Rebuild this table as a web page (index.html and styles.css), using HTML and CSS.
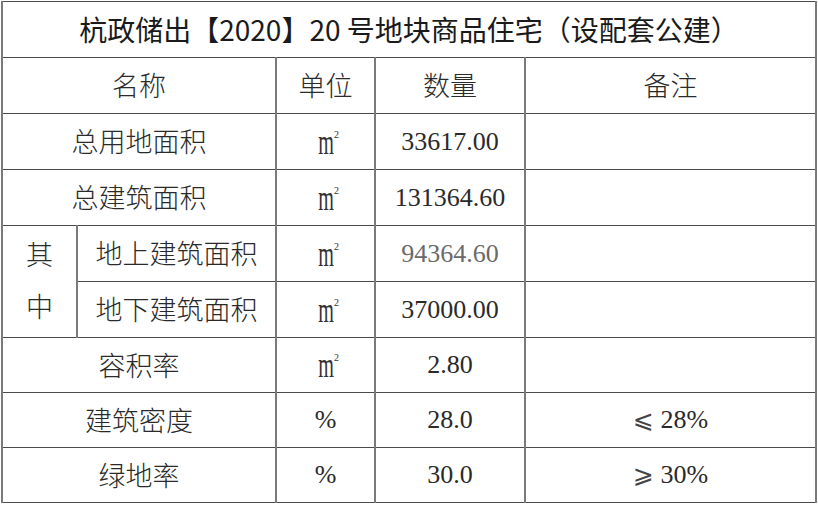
FILE: index.html
```html
<!DOCTYPE html>
<html lang="zh-CN">
<head>
<meta charset="utf-8">
<title>杭政储出【2020】20号地块</title>
<link rel="stylesheet" href="styles.css">
</head>
<body>
<table class="sheet">
  <colgroup>
    <col class="c-a"><col class="c-b"><col class="c-unit"><col class="c-qty"><col class="c-note">
  </colgroup>
  <tr class="row title-row">
    <td colspan="5" class="title">杭政储出【2020】20 号地块商品住宅（设配套公建）</td>
  </tr>
  <tr class="row">
    <td colspan="2" class="cjk">名称</td>
    <td class="cjk">单位</td>
    <td class="cjk">数量</td>
    <td class="cjk">备注</td>
  </tr>
  <tr class="row">
    <td colspan="2" class="cjk">总用地面积</td>
    <td class="unit"><span class="m">m</span><span class="sq">2</span></td>
    <td class="num">33617.00</td>
    <td></td>
  </tr>
  <tr class="row">
    <td colspan="2" class="cjk">总建筑面积</td>
    <td class="unit"><span class="m">m</span><span class="sq">2</span></td>
    <td class="num">131364.60</td>
    <td></td>
  </tr>
  <tr class="row">
    <td rowspan="2" class="cjk side">其<br>中</td>
    <td class="cjk">地上建筑面积</td>
    <td class="unit"><span class="m">m</span><span class="sq">2</span></td>
    <td class="num faded">94364.60</td>
    <td></td>
  </tr>
  <tr class="row">
    <td class="cjk">地下建筑面积</td>
    <td class="unit"><span class="m">m</span><span class="sq">2</span></td>
    <td class="num">37000.00</td>
    <td></td>
  </tr>
  <tr class="row short">
    <td colspan="2" class="cjk">容积率</td>
    <td class="unit"><span class="m">m</span><span class="sq">2</span></td>
    <td class="num">2.80</td>
    <td></td>
  </tr>
  <tr class="row short">
    <td colspan="2" class="cjk">建筑密度</td>
    <td class="num">%</td>
    <td class="num">28.0</td>
    <td class="num"><span class="rel">⩽</span> 28%</td>
  </tr>
  <tr class="row short">
    <td colspan="2" class="cjk">绿地率</td>
    <td class="num">%</td>
    <td class="num">30.0</td>
    <td class="num"><span class="rel">⩾</span> 30%</td>
  </tr>
</table>
</body>
</html>
```

FILE: styles.css
```css
html, body {
  margin: 0;
  padding: 0;
  background: #ffffff;
}

.sheet {
  border-collapse: collapse;
  table-layout: fixed;
  width: 814px;
  margin: 1px 0 0 1px;
  color: #2a2a2a;
}

.c-a { width: 75px; }
.c-b { width: 199px; }
.c-unit { width: 99px; }
.c-qty { width: 150px; }
.c-note { width: 291px; }

.sheet td {
  border-left: 2px solid #7a7a7a;
  border-right: 2px solid #7a7a7a;
  border-top: 1px solid #4a4a4a;
  border-bottom: 1px solid #4a4a4a;
  padding: 0;
  text-align: center;
  vertical-align: middle;
  height: 55px;
  line-height: 1.2;
}

.sheet .short td {
  height: 54px;
}

.title {
  font-family: "Noto Sans CJK SC", "Noto Sans", sans-serif;
  font-size: 28px;
  color: #1a1a1a;
  font-weight: 400;
}

.cjk {
  font-family: "Noto Sans CJK SC", sans-serif;
  font-size: 27px;
  font-weight: 300;
  color: #2a2a2a;
}

.sheet td.side {
  line-height: 52px;
  padding-bottom: 4px;
}

.num {
  font-family: "Liberation Serif", "Times New Roman", serif;
  font-size: 26px;
  color: #2a2a2a;
}

.faded {
  color: #6a6a6a;
}

.rel {
  font-family: "DejaVu Sans", "Liberation Serif", serif;
  font-size: 25px;
  color: #444444;
}

.unit {
  font-family: "Liberation Serif", "Times New Roman", serif;
  color: #333333;
}

.m {
  display: inline-block;
  font-size: 36px;
  line-height: 1;
  transform: scaleX(0.56);
  transform-origin: center center;
  margin: 0 -6px 0 0;
}

.sq {
  display: inline-block;
  font-size: 10px;
  vertical-align: 16px;
}
```
